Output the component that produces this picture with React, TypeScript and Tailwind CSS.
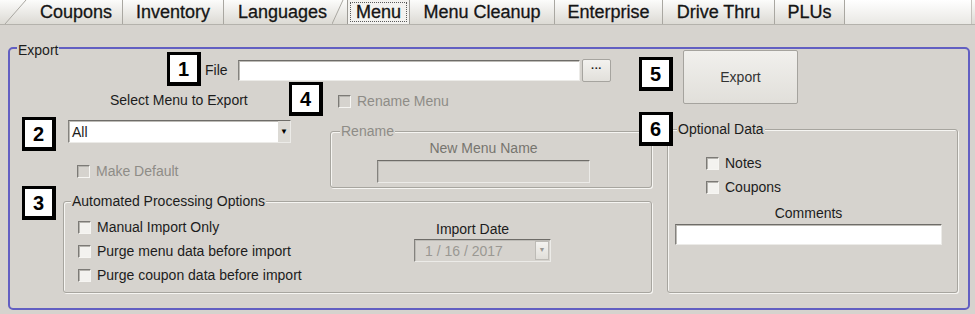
import type { ReactNode } from "react";

const tabs = [
  { label: "Coupons", w: "w-[93px]" },
  { label: "Inventory", w: "w-[101px]" },
];

const rightTabs = [
  { label: "Menu Cleanup", w: "w-[145px]" },
  { label: "Enterprise", w: "w-[108px]" },
  { label: "Drive Thru", w: "w-[112px]" },
  { label: "PLUs", w: "w-[70px]" },
];

function TabStrip() {
  return (
    <div className="flex h-[25px] border-b border-[#b4b2ac] bg-gradient-to-b from-[#fcfcfb] to-[#dcdad4] text-[18px] leading-none text-[#151515] [-webkit-text-stroke:0.3px_#151515]">
      <svg width="30" height="24" className="shrink-0">
        <line x1="5" y1="24" x2="26" y2="0" stroke="#a9a7a1" strokeWidth="1" />
      </svg>
      {tabs.map((t) => (
        <div
          key={t.label}
          className={`${t.w} flex shrink-0 items-center justify-center border-r border-[#a9a7a1]`}
        >
          {t.label}
        </div>
      ))}
      <div className="flex w-[108px] shrink-0 items-center pl-[14px]">Languages</div>
      <svg width="15" height="24" className="shrink-0">
        <line x1="0" y1="24" x2="11" y2="0" stroke="#a9a7a1" strokeWidth="1" />
      </svg>
      <div className="flex w-[63px] shrink-0 items-stretch border-x border-[#9d9b96] bg-[#f3f2ef] p-[2px]">
        <div className="flex flex-1 items-center justify-center border border-dotted border-[#5a5a5a]">
          Menu
        </div>
      </div>
      {rightTabs.map((t) => (
        <div
          key={t.label}
          className={`${t.w} flex shrink-0 items-center justify-center border-r border-[#a9a7a1]`}
        >
          {t.label}
        </div>
      ))}
      <div className="mr-[3px] flex-1 border-r border-[#c4c2bc] bg-gradient-to-b from-[#ffffff] to-[#e9e8e4]" />
    </div>
  );
}

function Check({ disabled = false }: { disabled?: boolean }) {
  return (
    <span
      className={`inline-block h-[13px] w-[13px] shrink-0 border border-b-[#f6f5f2] border-l-[#7c7a76] border-r-[#f6f5f2] border-t-[#7c7a76] shadow-[inset_1px_1px_0_#b5b3ae] ${
        disabled ? "bg-[#d6d3ce]" : "bg-[#f3f2ef]"
      }`}
    />
  );
}

function CheckRow({ label, disabled = false }: { label: string; disabled?: boolean }) {
  return (
    <div className="flex h-[16px] items-center gap-[6px] leading-[16px]">
      <Check disabled={disabled} />
      <span className={disabled ? "text-[#8e8c87]" : "text-[#1c1c1c]"}>{label}</span>
    </div>
  );
}

function Group({
  label,
  labelClass,
  className,
  children,
}: {
  label: string;
  labelClass: string;
  className: string;
  children: ReactNode;
}) {
  return (
    <div
      className={`relative shrink-0 rounded-[3px] border border-[#a7a59f] shadow-[inset_1px_1px_0_#f6f5f2,1px_1px_0_#f6f5f2] ${className}`}
    >
      <span className={`absolute top-[-9px] bg-[#d6d3ce] px-[1px] leading-[16px] ${labelClass}`}>
        {label}
      </span>
      {children}
    </div>
  );
}

function Badge({ n, pos }: { n: string; pos: string }) {
  return (
    <div
      className={`absolute flex h-[34px] w-[34px] items-center justify-center border-[3px] border-b-4 border-r-4 border-black bg-white text-[20px] font-bold leading-none text-black ${pos}`}
    >
      {n}
    </div>
  );
}

const sunken =
  "border border-b-[#ecebe8] border-l-[#84827e] border-r-[#ecebe8] border-t-[#6e6c68] shadow-[inset_1px_1px_0_#bdbbb6]";

export default function App() {
  return (
    <div className="relative h-[314px] w-[975px] overflow-hidden bg-[#d6d3ce] font-['Liberation_Sans',Arial,sans-serif] text-[14px] text-[#1c1c1c]">
      <TabStrip />

      <div className="pl-[8px] pt-[22px]">
        <div className="relative h-[263px] w-[962px] rounded-[5px] border-2 border-[#625fc2]">
          <span className="absolute left-[7px] top-[-7px] bg-[#d6d3ce] px-[1px] leading-[16px]">
            Export
          </span>

          <div className="flex">
            {/* main column */}
            <div className="flex w-[645px] shrink-0 flex-col">
              <div className="mt-[10px] flex h-[23px] items-center pl-[195px]">
                <span className="w-[33px] shrink-0">File</span>
                <div className={`h-[21px] w-[342px] bg-white ${sunken}`} />
                <button className="ml-[2px] flex h-[23px] w-[29px] items-start justify-center rounded-[2px] border border-[#a6a49f] bg-gradient-to-b from-[#f3f2ef] to-[#e2e0db] pt-[3px] text-[11px] font-bold leading-[10px] text-[#222]">
                  ···
                </button>
              </div>

              <div className="flex">
                <div className="flex w-[320px] shrink-0 flex-col">
                  <div className="mt-[10px] pl-[100px] leading-[16px]">Select Menu to Export</div>
                  <div
                    className={`ml-[58px] mt-[12px] flex h-[23px] w-[223px] items-center bg-white ${sunken}`}
                  >
                    <span className="flex-1 pl-[3px] leading-[16px]">All</span>
                    <span className="flex h-full w-[12px] items-center justify-center bg-[#dcdad5] text-[8px] text-black">
                      ▼
                    </span>
                  </div>
                  <div className="ml-[67px] mt-[20px]">
                    <CheckRow label="Make Default" disabled />
                  </div>
                </div>

                <div className="flex w-[322px] shrink-0 flex-col">
                  <div className="ml-[8px] mt-[11px]">
                    <CheckRow label="Rename Menu" disabled />
                  </div>
                  <Group
                    label="Rename"
                    labelClass="left-[9px] text-[#8e8c87]"
                    className="mt-[22px] h-[57px] w-[322px]"
                  >
                    <div className="ml-[46px] flex w-[213px] flex-col items-center pt-[8px]">
                      <span className="leading-[16px] text-[#77756f]">New Menu Name</span>
                      <div className={`mt-[4px] h-[23px] w-[213px] bg-[#d6d3ce] ${sunken}`} />
                    </div>
                  </Group>
                </div>
              </div>

              <Group
                label="Automated Processing Options"
                labelClass="left-[7px]"
                className="ml-[53px] mt-[13px] flex h-[92px] w-[589px]"
              >
                <div className="flex w-[350px] shrink-0 flex-col gap-[8px] pl-[14px] pt-[17px]">
                  <CheckRow label="Manual Import Only" />
                  <CheckRow label="Purge menu data before import" />
                  <CheckRow label="Purge coupon data before import" />
                </div>
                <div className="flex w-[137px] shrink-0 flex-col pt-[19px]">
                  <span className="pl-[22px] leading-[16px]">Import Date</span>
                  <div
                    className={`mt-[2px] flex h-[23px] w-[137px] items-center bg-[#d6d3ce] ${sunken}`}
                  >
                    <span className="flex-1 pl-[10px] leading-[16px] text-[#9a9893]">
                      1 / 16 / 2017
                    </span>
                    <span className="mr-[1px] flex h-[19px] w-[14px] items-center justify-center border border-[#bdbbb6] bg-gradient-to-b from-[#f4f3f0] to-[#e0ded9] text-[7px] text-[#9a9893]">
                      ▼
                    </span>
                  </div>
                </div>
              </Group>
            </div>

            {/* right column */}
            <div className="flex w-[313px] shrink-0 flex-col">
              <button className="ml-[28px] mt-[1px] h-[54px] w-[115px] rounded-[2px] border border-[#a5a39e] bg-gradient-to-b from-[#f1f0ed] to-[#e1dfda] text-[14px] text-[#333]">
                Export
              </button>
              <Group
                label="Optional Data"
                labelClass="left-[9px]"
                className="ml-[12px] mt-[25px] h-[164px] w-[291px]"
              >
                <div className="flex flex-col gap-[8px] pl-[38px] pt-[25px]">
                  <CheckRow label="Notes" />
                  <CheckRow label="Coupons" />
                </div>
                <div className="ml-[7px] mt-[10px] flex w-[267px] flex-col items-center">
                  <span className="leading-[16px]">Comments</span>
                  <div className={`mt-[3px] h-[21px] w-[267px] bg-white ${sunken}`} />
                </div>
              </Group>
            </div>
          </div>
        </div>
      </div>

      <Badge n="1" pos="left-[167px] top-[52px]" />
      <Badge n="4" pos="left-[289px] top-[82px]" />
      <Badge n="5" pos="left-[639px] top-[57px]" />
      <Badge n="2" pos="left-[22px] top-[117px]" />
      <Badge n="3" pos="left-[22px] top-[186px]" />
      <Badge n="6" pos="left-[639px] top-[112px]" />
    </div>
  );
}
